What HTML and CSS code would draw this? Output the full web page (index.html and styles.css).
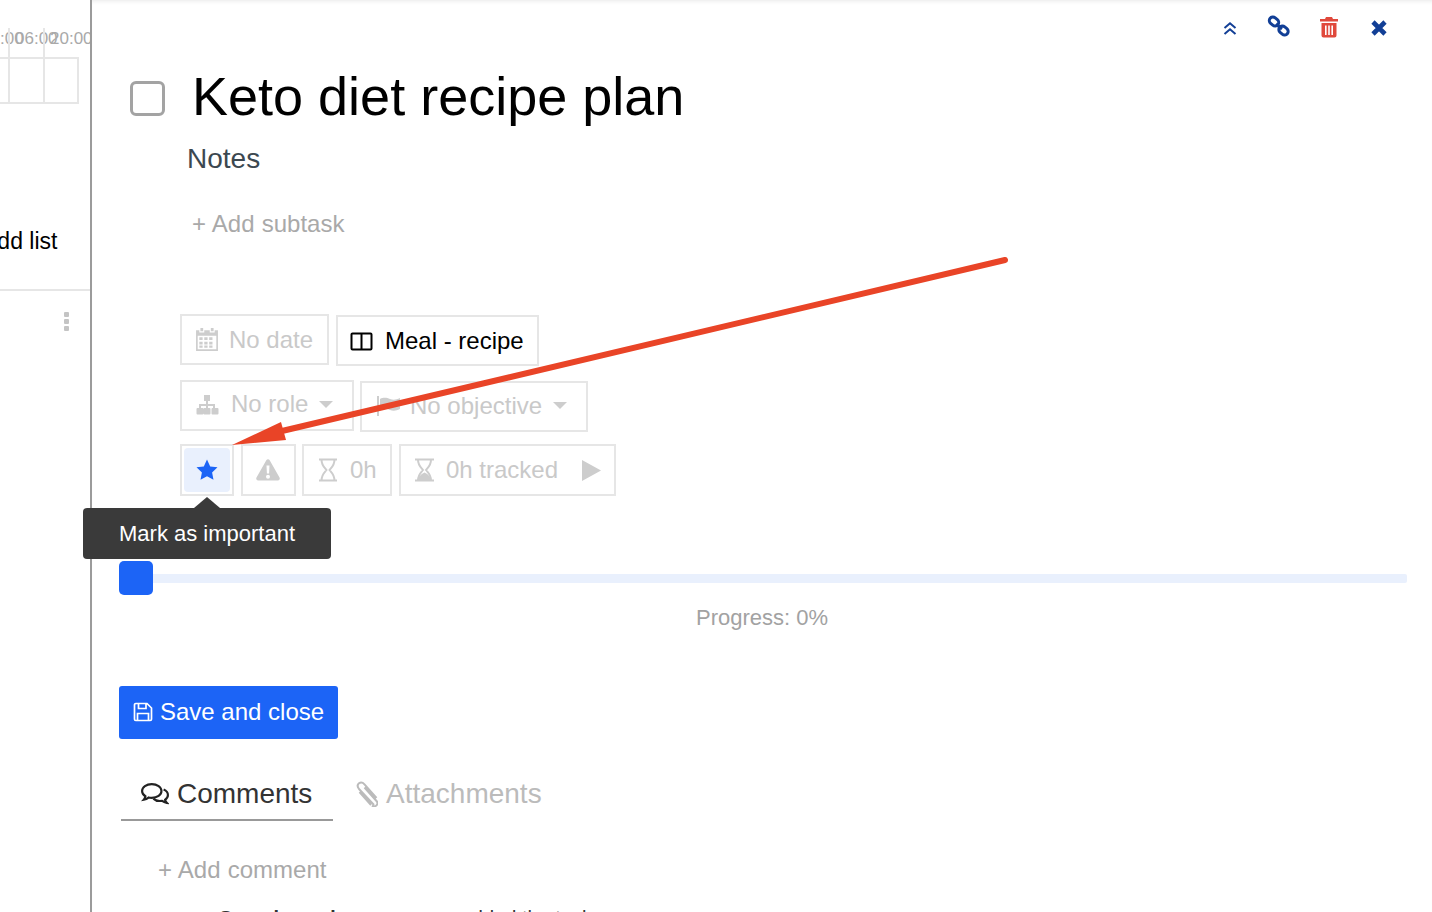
FILE: index.html
```html
<!DOCTYPE html>
<html lang="en">
<head>
<meta charset="utf-8">
<title>Keto diet recipe plan</title>
<link rel="stylesheet" href="styles.css">
</head>
<body>
<div class="page">
  <aside class="side">
    <div class="hours"><span class="h1">:00</span><span class="h2">06:00</span><span class="h3">20:00</span></div>
    <div class="tick t1"></div><div class="tick t2"></div>
    <div class="gridbox"><i></i><i></i><i></i></div>
    <div class="addlist">Add list</div>
    <div class="rule"></div>
    <svg class="dots" viewBox="0 0 5 19" width="5" height="19"><rect width="5" height="5" rx="1"/><rect y="7" width="5" height="5" rx="1"/><rect y="14" width="5" height="5" rx="1"/></svg>
  </aside>
  <main class="panel">
    <div class="topicons">
      <svg width="16" height="16" viewBox="0 0 16 16" class="navy"><path d="M2.500 8 8 3.300 13.500 8M2.500 14 8 9.300 13.500 14" fill="none" stroke="currentColor" stroke-width="2"/></svg>
      <svg width="24" height="24" viewBox="0 0 24 24" class="navy"><g fill="none" stroke="currentColor" stroke-width="3"><rect x="-5" y="-3.600" width="10" height="7.200" rx="3.600" transform="translate(7 6.500) rotate(40)"/><rect x="-5" y="-3.600" width="10" height="7.200" rx="3.600" transform="translate(16.500 15.500) rotate(40)"/><path d="M9 9l6 5"/></g></svg>
      <svg width="20" height="22" viewBox="0 0 20 22" class="red"><path fill="currentColor" d="M7 1h6l1 2h5v2.400H1V3h5zM2.500 7h15v12.500a2 2 0 0 1-2 2h-11a2 2 0 0 1-2-2zM6 9.500V19h1.600V9.500zm3.200 0V19h1.600V9.500zm3.200 0V19H14V9.500z"/></svg>
      <svg width="18" height="18" viewBox="0 0 18 18" class="navy"><path d="M3 3l12 12M15 3 3 15" fill="none" stroke="currentColor" stroke-width="4.600"/></svg>
    </div>
    <div class="titlerow"><span class="check"></span><h1>Keto diet recipe plan</h1></div>
    <div class="notes">Notes</div>
    <div class="addsub">+ Add subtask</div>

    <div class="chips row1">
      <div class="chip c-date"><svg width="22" height="23" viewBox="1 1 20 21" class="ic"><path fill="currentColor" d="M5 1h2.500v3H5zM14.500 1H17v3h-2.500zM1 3h3v2h4.500V3h5v2H18V3h3v19H1zm1.500 5v12.500h17V8zm1.500 1.500h3v2.500H4zm4.500 0h3v2.500h-3zm4.500 0h3v2.500h-3zm-9 4h3V16H4zm4.500 0h3V16h-3zm4.500 0h3V16h-3zm-9 3.500h3v2H4zm4.500 0h3v2h-3zm4.500 0h3v2h-3z"/></svg><span>No date</span></div>
      <div class="chip c-meal"><svg width="23" height="19" viewBox="0 0 23 19"><path fill="none" stroke="#000" stroke-width="2" d="M2.500 1.500h18a1 1 0 0 1 1 1v14a1 1 0 0 1-1 1h-18a1 1 0 0 1-1-1v-14a1 1 0 0 1 1-1zM11.500 1.500v16"/></svg><span>Meal - recipe</span></div>
    </div>
    <div class="chips row2">
      <div class="chip c-role"><svg width="24" height="21" viewBox="0 0 24 21" class="ic"><path fill="currentColor" d="M9 1h6v6h-2v3h7v4h2.500a1 1 0 0 1 1 1v4.500a1 1 0 0 1-1 1h-5a1 1 0 0 1-1-1V15a1 1 0 0 1 1-1H18v-2h-5v2h1.500a1 1 0 0 1 1 1v4.500a1 1 0 0 1-1 1h-5a1 1 0 0 1-1-1V15a1 1 0 0 1 1-1H11v-2H6v2h1.500a1 1 0 0 1 1 1v4.500a1 1 0 0 1-1 1h-5a1 1 0 0 1-1-1V15a1 1 0 0 1 1-1H4v-4h7V7H9z"/></svg><span>No role</span><b class="caret"></b></div>
      <div class="chip c-obj"><svg width="25" height="20" viewBox="0 0 25 20" class="ic"><path fill="currentColor" d="M1 0h2v20H1zM4 3c4-2 7-1 10 0s6 1 10-1v11c-4 2-7 2-10 1s-6-2-10 0z"/></svg><span>No objective</span><b class="caret"></b></div>
    </div>
    <div class="chips row3">
      <div class="chip c-star"><span class="starbg"><svg width="24" height="24" viewBox="0 0 24 24"><path fill="#1c64f6" d="m12 1.500 3.200 6.900 7.300.9-5.400 5.100 1.400 7.400L12 18.200l-6.500 3.600 1.400-7.400-5.400-5.100 7.300-.9z"/></svg></span></div>
      <div class="chip c-warn"><svg width="24" height="22" viewBox="0 0 24 22" class="ic"><path fill="currentColor" fill-rule="evenodd" d="M10.300 1.300a2 2 0 0 1 3.400 0l9.800 17.200a2 2 0 0 1-1.700 3H2.200a2 2 0 0 1-1.700-3zM10.500 6.500l.4 8h2.200l.4-8zM12 15.700a2 2 0 1 0 0 4 2 2 0 0 0 0-4z"/></svg></div>
      <div class="chip c-est"><svg width="20" height="24" viewBox="0 0 20 24" class="ic"><path fill="none" stroke="currentColor" stroke-width="2" d="M1 1.500h18M1 22.500h18M3.500 1.500c0 6 3 8 5 10.500-2 2.500-5 4.500-5 10.500M16.500 1.500c0 6-3 8-5 10.500 2 2.500 5 4.500 5 10.500"/></svg><span>0h</span></div>
      <div class="chip c-track"><svg width="21" height="24" viewBox="0 0 21 24" class="ic"><path fill="none" stroke="currentColor" stroke-width="2" d="M1 1.500h19M1 22.500h19M4 1.500c0 6 3 8 5 10.500-2 2.500-5 4.500-5 10.500M17 1.500c0 6-3 8-5 10.500 2 2.500 5 4.500 5 10.500"/><path fill="currentColor" d="M3.500 22c.5-3 3-5.500 7-7.500 4 2 6.500 4.500 7 7.500z"/></svg><span>0h tracked</span><svg class="play ic" width="19" height="21" viewBox="0 0 19 21"><path fill="currentColor" d="M0 0l19 10.500L0 21z"/></svg></div>
    </div>
    <div class="tooltip"><span class="tiparrow"></span>Mark as important</div>

    <div class="slider"><span class="thumb"></span></div>
    <div class="progress">Progress: 0%</div>

    <div class="save"><svg width="20" height="20" viewBox="0 0 20 20"><path fill="none" stroke="#fff" stroke-width="1.700" d="M1.500 2.800a1.300 1.300 0 0 1 1.300-1.300H14l4.500 4.500v11.200a1.300 1.300 0 0 1-1.300 1.300H2.800a1.300 1.300 0 0 1-1.300-1.300zM5.500 1.500v5h7.500v-5M4.500 18.500v-7h11v7"/></svg><span>Save and close</span></div>

    <div class="tabs">
      <div class="tab active"><svg width="28" height="22" viewBox="1 2 26 20" preserveAspectRatio="none"><g fill="none" stroke="#222" stroke-width="2"><path d="M11 3c5 0 9 2.800 9 6.300s-4 6.200-9 6.200c-1 0-2 0-3-.3-1.300 1-2.700 1.600-4.400 1.900.8-.9 1.300-1.900 1.500-3C3.200 13 2 11.300 2 9.300 2 5.800 6 3 11 3z"/><path d="M22 8c2.500 1 4 2.900 4 5 0 1.700-1 3.200-2.600 4.200.2 1.100.7 2 1.500 2.800-1.700-.3-3.100-.9-4.300-1.800-3 .4-6.300-.2-8.100-2"/></g></svg><span>Comments</span></div>
      <div class="tab"><svg width="24" height="26" viewBox="0 0 24 26"><path fill="none" stroke="#bbb" stroke-width="2" d="M20 24 5 8C3 5.500 3.500 3.500 5 2.300c1.700-1.300 3.700-1 5.500 1l12 13.700M18 24.500c1.500 1.300 3.500 1 4.500-.2 1.200-1.200 1.200-3 0-4.300L10.500 6.500M17 24 5.500 11"/></svg><span>Attachments</span></div>
    </div>
    <div class="addcomment">+ Add comment</div>
    <div class="cutoff"><b>Someh a wd</b><span>added the task</span></div>
  </main>
  <svg class="arrow" width="1432" height="912" viewBox="0 0 1432 912"><path d="M1005 260 282 431" stroke="#e94427" stroke-width="6" stroke-linecap="round" fill="none"/><path d="M232 445 281 422 286 440z" fill="#e94427"/></svg>
</div>
</body>
</html>
```
FILE: styles.css
```css
* { box-sizing: border-box; }
html, body { margin: 0; padding: 0; height: 100%; overflow: hidden; background: #fff; font-family: "Liberation Sans", Arial, sans-serif; }
.page { position: relative; width: 1432px; height: 912px; overflow: hidden; display: flex; }
.side { position: relative; width: 92px; flex: none; height: 912px; border-right: 2px solid #9b9b9b; overflow: hidden; }
.hours { position: absolute; top: 30px; left: 0; width: 90px; height: 20px; font-size: 17px; color: #a9a9a9; }
.hours span { position: absolute; top: 0; line-height: 18px; white-space: nowrap; }
.h1 { left: 0; }
.h2 { left: 15px; }
.h3 { left: 50px; }
.tick { position: absolute; top: 28px; width: 2px; height: 30px; background: #e6e6e6; }
.t1 { left: 8px; }
.t2 { left: 43px; }
.gridbox { position: absolute; top: 57px; left: -30px; width: 109px; height: 47px; border: 2px solid #e6e6e6; display: flex; }
.gridbox i { display: block; border-right: 2px solid #e6e6e6; }
.gridbox i:first-child { width: 2px; border: 0; }
.gridbox i:nth-child(2) { width: 36px; }
.gridbox i:nth-child(3) { width: 35px; }
.addlist { position: absolute; top: 229px; left: -18px; font-size: 23px; line-height: 24px; color: #000; white-space: nowrap; }
.rule { position: absolute; top: 289px; left: 0; width: 90px; height: 2px; background: #e6e6e6; }
.dots { position: absolute; top: 312px; left: 64px; fill: #c4c4c4; }

.panel { position: relative; flex: 1; height: 912px; box-shadow: inset 0 4px 4px -3px #e8e8e8; padding: 0 0 0 27px; }
.topicons { position: absolute; top: 14px; left: 1130px; width: 180px; height: 28px; }
.topicons svg { position: absolute; }
.topicons svg:nth-child(1) { left: 0; top: 6px; }
.topicons svg:nth-child(2) { left: 45px; top: 1px; }
.topicons svg:nth-child(3) { left: 97px; top: 2px; }
.topicons svg:nth-child(4) { left: 148px; top: 5px; }
.navy { color: #123f96; }
.red { color: #e0493c; }

.titlerow { display: flex; align-items: center; padding: 62px 0 0 11px; height: 130px; }
.check { width: 35px; height: 35px; border: 3px solid #a3a3a3; border-radius: 6px; flex: none; margin-top: 4px; }
h1 { margin: 0 0 0 27px; font-weight: 400; font-size: 54px; line-height: 68px; color: #000; white-space: nowrap; }
.notes { margin: 12px 0 0 68px; font-size: 28px; line-height: 34px; color: #3c4850; }
.addsub { margin: 33px 0 0 73px; font-size: 24px; line-height: 30px; color: #a9a9a9; word-spacing: .5px; }

.chips { display: flex; margin-left: 61px; gap: 7px; align-items: flex-start; }
.row1 { margin-top: 75px; height: 52px; }
.row2 { margin-top: 14px; height: 52px; }
.row3 { margin-top: 12px; height: 52px; }
.chip { display: flex; align-items: center; border: 2px solid #e6e6e6; background: #fff; color: #c9c9c9; font-size: 24px; white-space: nowrap; flex: none; }
.ic { color: #cdcdcd; flex: none; }
.c-date { width: 149px; height: 51px; padding-left: 14px; gap: 11px; }
.c-meal { width: 203px; height: 51px; margin-top: 1px; padding-left: 12px; padding-top: 1px; gap: 12px; color: #000; }
.c-role { width: 174px; height: 51px; padding-left: 13px; padding-bottom: 3px; gap: 12px; }
.c-obj { width: 228px; height: 51px; margin-top: 1px; padding-left: 14px; padding-bottom: 2px; gap: 9px; margin-left: -1px; }
.caret { width: 0; height: 0; border: 7px solid transparent; border-top: 7px solid #cdcdcd; border-bottom: 0; margin-top: 0; }
.c-role .caret { margin-left: -1px; }
.c-obj .caret { margin-left: 2px; }
.c-star { width: 54px; height: 52px; padding: 2px; }
.starbg { width: 46px; height: 44px; background: #e9f0fd; border-radius: 4px; display: flex; align-items: center; justify-content: center; }
.c-warn { width: 55px; height: 52px; justify-content: center; padding-right: 2px; }
.c-est { width: 90px; height: 52px; padding-left: 14px; gap: 12px; margin-left: -1px; }
.c-track { width: 217px; height: 52px; padding-left: 13px; gap: 11px; }
.play { margin-left: 13px; }

.tooltip { position: absolute; top: 508px; left: -9px; width: 248px; height: 51px; background: #3a3a3a; border-radius: 4px; color: #fff; font-size: 22px; line-height: 51px; padding-left: 36px; z-index: 2; white-space: nowrap; }
.tiparrow { position: absolute; top: -11px; left: 111px; width: 0; height: 0; border: 13px solid transparent; border-top: 0; border-bottom: 11px solid #3a3a3a; }

.slider { position: relative; margin: 78px 0 0 0; width: 1288px; height: 9px; background: #e9f0fd; border-radius: 2px; }
.thumb { position: absolute; left: 0; top: -13px; width: 34px; height: 34px; background: #1c64f6; border-radius: 5px; }
.progress { margin: 22px 0 0 0; padding-left: 577px; font-size: 22px; line-height: 26px; color: #a2a2a2; }

.save { display: flex; align-items: center; gap: 7px; margin-top: 55px; width: 219px; height: 53px; padding: 0 0 2px 14px; background: #1c64f6; border-radius: 3px; color: #fff; font-size: 24px; }
.tabs { display: flex; margin: 28px 0 0 2px; }
.tab { display: flex; align-items: center; gap: 8px; height: 54px; font-size: 28px; color: #bbb; padding: 0 21px; }
.tab.active { color: #333; width: 212px; border-bottom: 2px solid #999; gap: 8px; padding: 2px 0 0 20px; }
.addcomment { margin: 34px 0 0 39px; font-size: 24px; line-height: 30px; color: #a9a9a9; word-spacing: .5px; }
.cutoff { display: flex; gap: 125px; margin: 21px 0 0 100px; font-size: 20px; line-height: 24px; color: #333; white-space: nowrap; }
.arrow { position: absolute; left: 0; top: 0; z-index: 3; pointer-events: none; }
```
